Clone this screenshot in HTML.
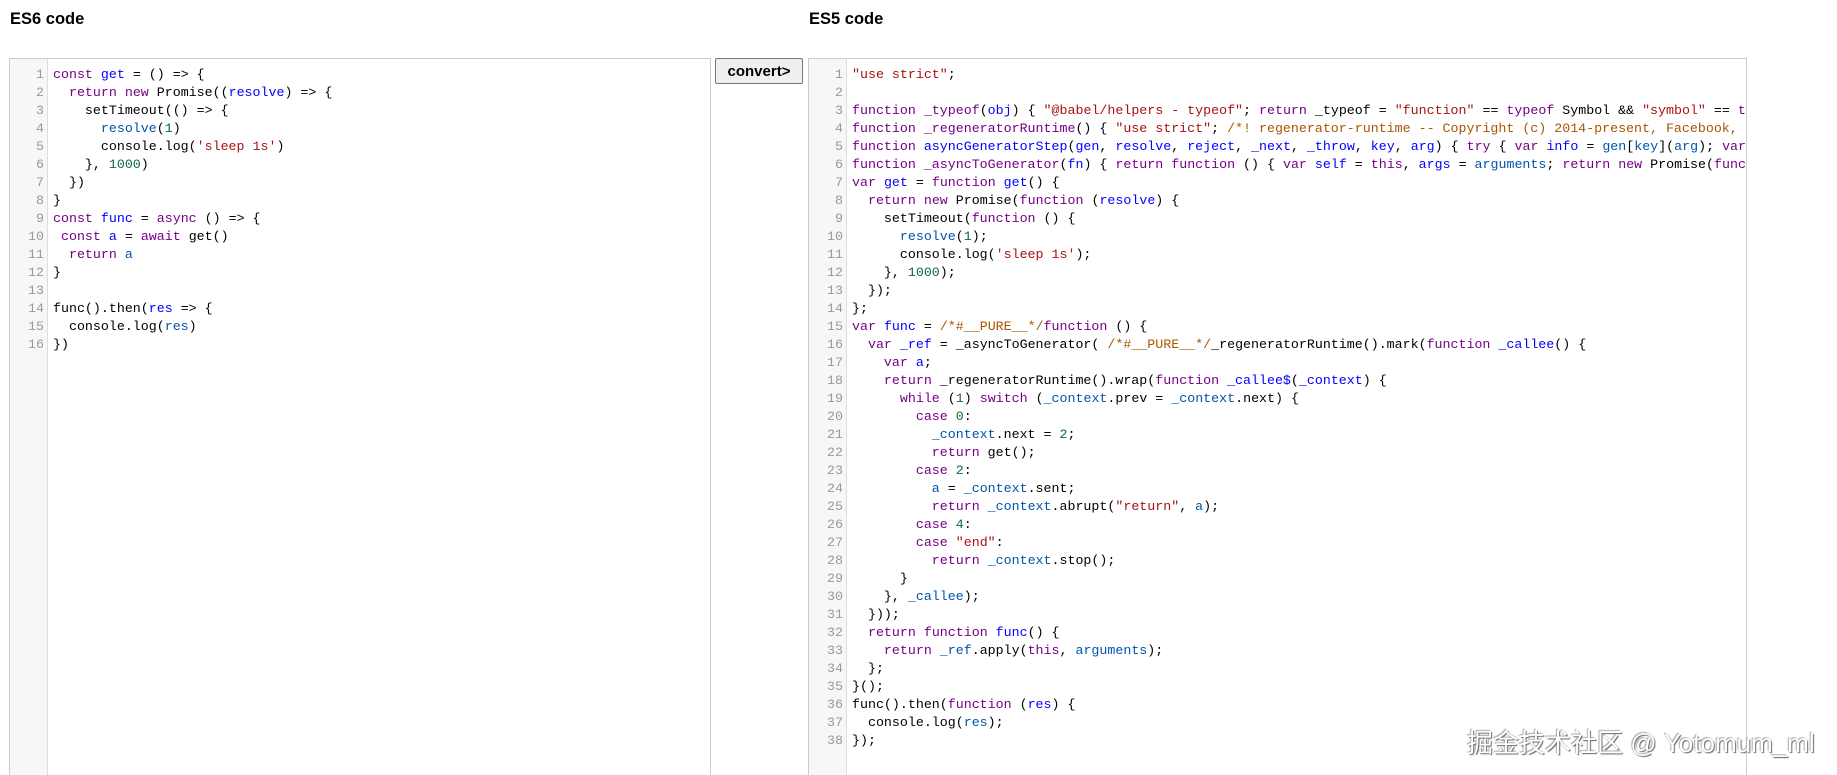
<!DOCTYPE html>
<html><head><meta charset="utf-8"><style>
*{margin:0;padding:0;box-sizing:border-box}
html,body{width:1837px;height:775px;overflow:hidden}
body{background:#fff;position:relative;font-family:"Liberation Sans",sans-serif}
h3{position:absolute;top:10px;font-size:16.5px;font-weight:bold;color:#000}
.ed{position:absolute;top:58px;height:717px;border:1px solid #ccc;border-bottom:none;background:#fff;overflow:hidden}
.gut{position:absolute;left:0;top:0;bottom:0;width:38px;background:#f7f7f7;border-right:1px solid #ddd}
.ln{position:absolute;left:0;width:34px;text-align:right;top:7px;font-family:"Liberation Mono",monospace;font-size:13.3px;line-height:18px;color:#999}
.code{position:absolute;left:43px;top:7px;font-family:"Liberation Mono",monospace;font-size:13.3px;line-height:18px;color:#000;white-space:pre}
.k{color:#708}.d{color:#00f}.v{color:#05a}.s{color:#a11}.n{color:#164}.c{color:#a50}.a{color:#219}
button{position:absolute;left:715px;top:58px;width:88px;height:26px;font:bold 15px "Liberation Sans",sans-serif;background:#efefef;border:1px solid #767676;border-radius:2px;color:#000}
.wm{position:absolute;left:1467px;top:723px;font:26px "Liberation Sans","Noto Sans CJK SC",sans-serif;color:#fff;text-shadow:1px 1px 1px #666,-1px -1px 1px #aaa;white-space:nowrap}
</style></head><body>
<h3 style="left:10px">ES6 code</h3>
<h3 style="left:809px">ES5 code</h3>
<div class="ed" style="left:9px;width:702px">
<div class="gut"></div>
<div class="ln">1<br>2<br>3<br>4<br>5<br>6<br>7<br>8<br>9<br>10<br>11<br>12<br>13<br>14<br>15<br>16</div>
<div class="code"><span class="k">const</span> <span class="d">get</span> = () =&gt; {
  <span class="k">return</span> <span class="k">new</span> Promise((<span class="d">resolve</span>) =&gt; {
    setTimeout(() =&gt; {
      <span class="v">resolve</span>(<span class="n">1</span>)
      console.log(<span class="s">'sleep 1s'</span>)
    }, <span class="n">1000</span>)
  })
}
<span class="k">const</span> <span class="d">func</span> = <span class="k">async</span> () =&gt; {
 <span class="k">const</span> <span class="d">a</span> = <span class="k">await</span> get()
  <span class="k">return</span> <span class="v">a</span>
}

func().then(<span class="d">res</span> =&gt; {
  console.log(<span class="v">res</span>)
})</div>
</div>
<button>convert&gt;</button>
<div class="ed" style="left:808px;width:939px">
<div class="gut"></div>
<div class="ln">1<br>2<br>3<br>4<br>5<br>6<br>7<br>8<br>9<br>10<br>11<br>12<br>13<br>14<br>15<br>16<br>17<br>18<br>19<br>20<br>21<br>22<br>23<br>24<br>25<br>26<br>27<br>28<br>29<br>30<br>31<br>32<br>33<br>34<br>35<br>36<br>37<br>38</div>
<div class="code"><span class="s">"use strict"</span>;

<span class="k">function</span> <span class="k">_typeof</span>(<span class="d">obj</span>) { <span class="s">"@babel/helpers - typeof"</span>; <span class="k">return</span> _typeof = <span class="s">"function"</span> == <span class="k">typeof</span> Symbol &amp;&amp; <span class="s">"symbol"</span> == <span class="k">typeof</span> Symbol.iterator
<span class="k">function</span> <span class="k">_regeneratorRuntime</span>() { <span class="s">"use strict"</span>; <span class="c">/*! regenerator-runtime -- Copyright (c) 2014-present, Facebook, Inc. */</span>
<span class="k">function</span> <span class="d">asyncGeneratorStep</span>(<span class="d">gen</span>, <span class="d">resolve</span>, <span class="d">reject</span>, <span class="d">_next</span>, <span class="d">_throw</span>, <span class="d">key</span>, <span class="d">arg</span>) { <span class="k">try</span> { <span class="k">var</span> <span class="d">info</span> = <span class="v">gen</span>[<span class="v">key</span>](<span class="v">arg</span>); <span class="k">var</span> value
<span class="k">function</span> <span class="k">_asyncToGenerator</span>(<span class="d">fn</span>) { <span class="k">return</span> <span class="k">function</span> () { <span class="k">var</span> <span class="d">self</span> = <span class="k">this</span>, <span class="d">args</span> = <span class="v">arguments</span>; <span class="k">return</span> <span class="k">new</span> Promise(<span class="k">function</span>
<span class="k">var</span> <span class="d">get</span> = <span class="k">function</span> <span class="d">get</span>() {
  <span class="k">return</span> <span class="k">new</span> Promise(<span class="k">function</span> (<span class="d">resolve</span>) {
    setTimeout(<span class="k">function</span> () {
      <span class="v">resolve</span>(<span class="n">1</span>);
      console.log(<span class="s">'sleep 1s'</span>);
    }, <span class="n">1000</span>);
  });
};
<span class="k">var</span> <span class="d">func</span> = <span class="c">/*#__PURE__*/</span><span class="k">function</span> () {
  <span class="k">var</span> <span class="d">_ref</span> = _asyncToGenerator( <span class="c">/*#__PURE__*/</span>_regeneratorRuntime().mark(<span class="k">function</span> <span class="d">_callee</span>() {
    <span class="k">var</span> <span class="d">a</span>;
    <span class="k">return</span> _regeneratorRuntime().wrap(<span class="k">function</span> <span class="d">_callee$</span>(<span class="d">_context</span>) {
      <span class="k">while</span> (<span class="n">1</span>) <span class="k">switch</span> (<span class="v">_context</span>.prev = <span class="v">_context</span>.next) {
        <span class="k">case</span> <span class="n">0</span>:
          <span class="v">_context</span>.next = <span class="n">2</span>;
          <span class="k">return</span> get();
        <span class="k">case</span> <span class="n">2</span>:
          <span class="v">a</span> = <span class="v">_context</span>.sent;
          <span class="k">return</span> <span class="v">_context</span>.abrupt(<span class="s">"return"</span>, <span class="v">a</span>);
        <span class="k">case</span> <span class="n">4</span>:
        <span class="k">case</span> <span class="s">"end"</span>:
          <span class="k">return</span> <span class="v">_context</span>.stop();
      }
    }, <span class="v">_callee</span>);
  }));
  <span class="k">return</span> <span class="k">function</span> <span class="d">func</span>() {
    <span class="k">return</span> <span class="v">_ref</span>.apply(<span class="k">this</span>, <span class="v">arguments</span>);
  };
}();
func().then(<span class="k">function</span> (<span class="d">res</span>) {
  console.log(<span class="v">res</span>);
});</div>
</div>
<div class="wm">掘金技术社区 @ Yotomum_ml</div>
</body></html>
